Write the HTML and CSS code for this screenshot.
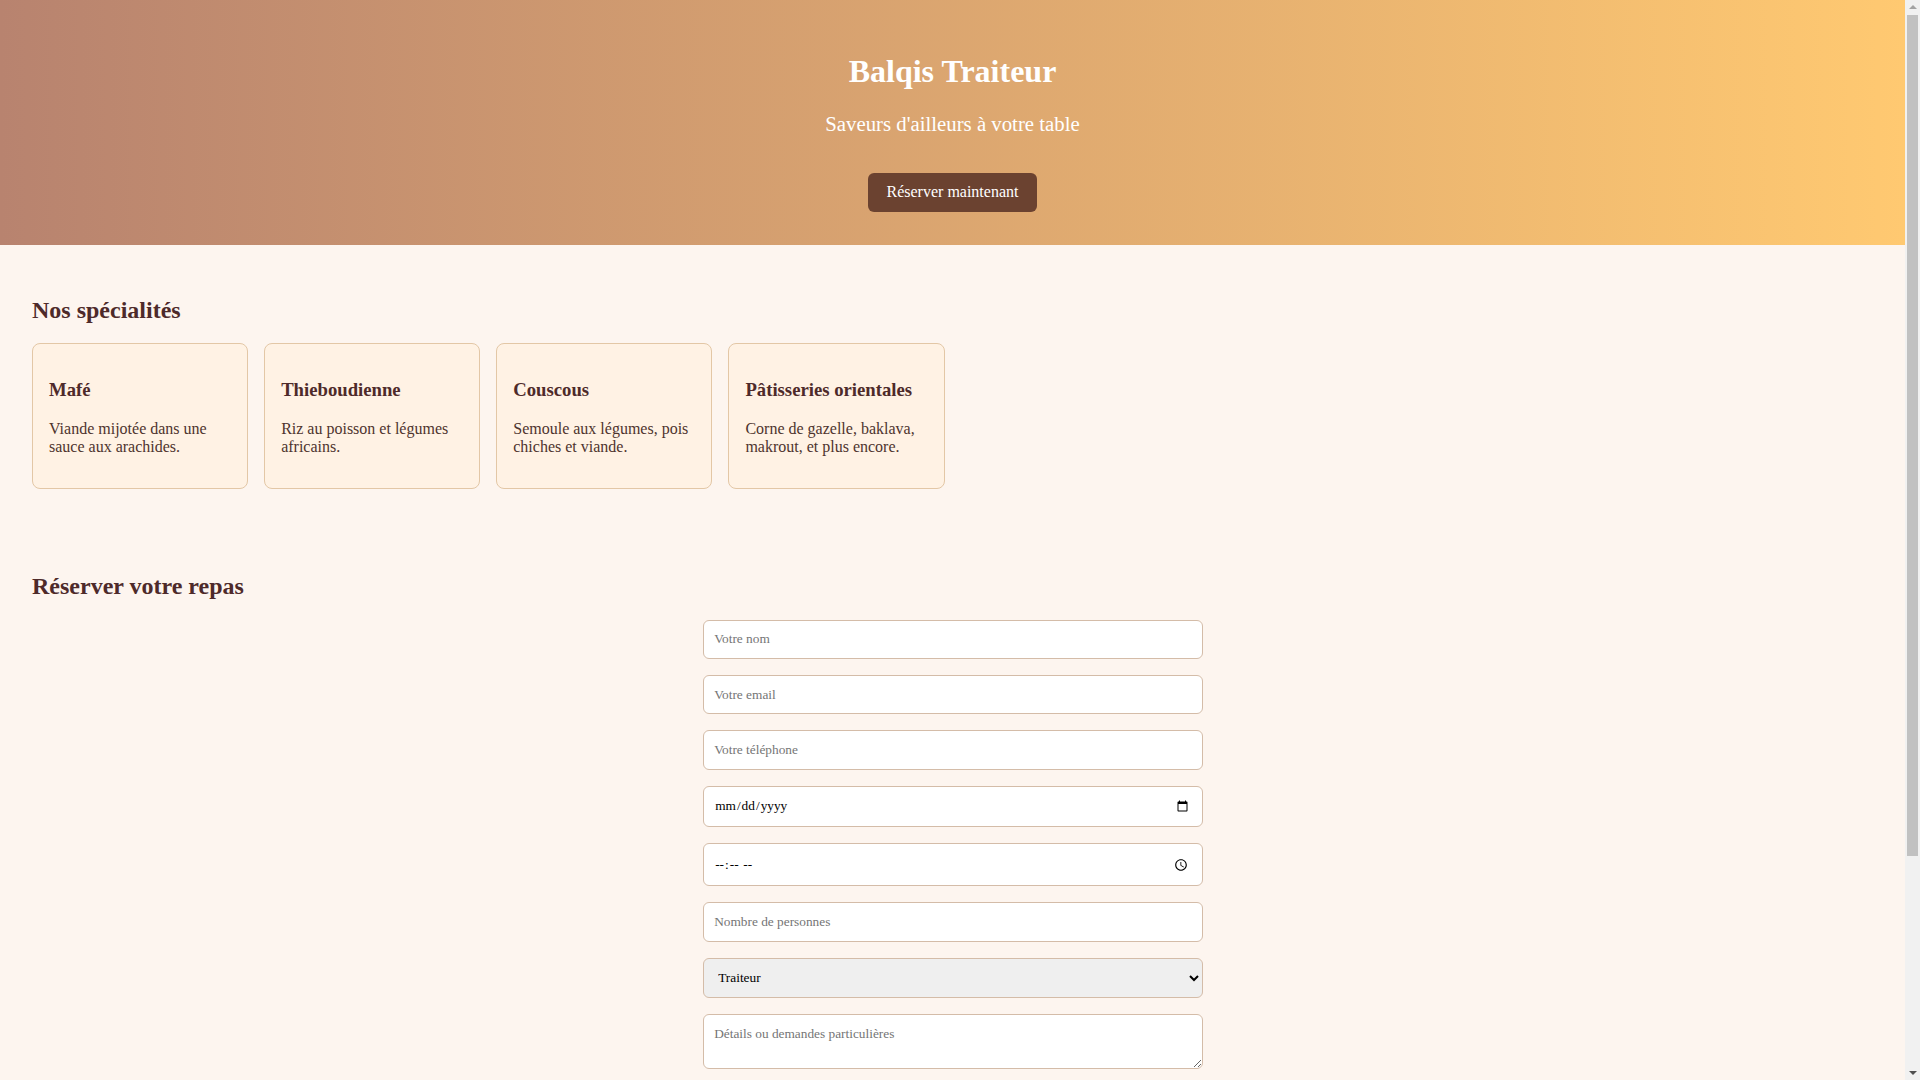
FILE: index.html
```html
<!DOCTYPE html>
<html lang="fr">
<head>
    <meta charset="UTF-8">
    <meta name="viewport" content="width=device-width, initial-scale=1.0">
    <title>Balqis Traiteur</title>
    <link rel="stylesheet" href="styles.css">
</head>
<body>
    <header class="hero">
        <h1>Balqis Traiteur</h1>
        <p>Saveurs d'ailleurs à votre table</p>
        <a href="#reservation" class="btn">Réserver maintenant</a>
    </header>

    <section class="specialites">
        <h2>Nos spécialités</h2>
        <div class="cards">
            <div class="card">
                <h3>Mafé</h3>
                <p>Viande mijotée dans une sauce aux arachides.</p>
            </div>
            <div class="card">
                <h3>Thieboudienne</h3>
                <p>Riz au poisson et légumes africains.</p>
            </div>
            <div class="card">
                <h3>Couscous</h3>
                <p>Semoule aux légumes, pois chiches et viande.</p>
            </div>
            <div class="card">
                <h3>Pâtisseries orientales</h3>
                <p>Corne de gazelle, baklava, makrout, et plus encore.</p>
            </div>
        </div>
    </section>

    <section class="reservation" id="reservation">
        <h2>Réserver votre repas</h2>
        <form class="resa-form">
            <input type="text" name="nom" placeholder="Votre nom">
            <input type="email" name="email" placeholder="Votre email">
            <input type="tel" name="telephone" placeholder="Votre téléphone">
            <input type="date" name="date">
            <input type="time" name="heure">
            <input type="number" name="personnes" placeholder="Nombre de personnes">
            <select name="type">
                <option>Traiteur</option>
                <option>Sur place</option>
                <option>À emporter</option>
            </select>
            <textarea name="details" placeholder="Détails ou demandes particulières"></textarea>
            <button type="submit">Envoyer la réservation</button>
        </form>
    </section>

    <section class="contact">
        <h2>Contact</h2>
        <p>Téléphone : 06 12 34 56 78 — contact@balqis-traiteur.fr</p>
    </section>

    <footer class="footer">
        <p>&copy; 2024 Balqis Traiteur</p>
    </footer>

    <!-- fausse barre de défilement (la capture en montre une) -->
    <div class="scrollbar" aria-hidden="true">
        <span class="arrow up"></span>
        <span class="thumb"></span>
        <span class="arrow down"></span>
    </div>
</body>
</html>
```

FILE: styles.css
```css
body {
    font-family: "Liberation Serif", "Times New Roman", serif;
    background-color: #fdf5ef;
    color: #4e342e;
    margin: 0 15px 0 0;
    padding: 0;
}

.hero {
    background: linear-gradient(to right, #b8836f, #ffc971);
    color: white;
    text-align: center;
    padding: 2rem 2rem 33px;
}

.hero h1 {
    font-size: 2em;
    margin: 0.67em 0;
}

.hero p {
    font-size: 1.3em;
}

.btn {
    display: inline-block;
    margin-top: 1rem;
    background-color: #6b4230;
    color: #fff;
    padding: 10.5px 19px;
    border-radius: 6px;
    text-decoration: none;
}

section {
    padding: 2rem;
}

h2 {
    color: #4e2a2a;
}

.cards {
    display: grid;
    grid-template-columns: repeat(auto-fill, minmax(200px, 1fr));
    gap: 1rem;
}

.card {
    background-color: #fff2e4;
    border: 1px solid #e3c7a6;
    border-radius: 8px;
    padding: 1rem;
}

.card h3 {
    color: #4e2a2a;
}

.resa-form {
    display: flex;
    flex-direction: column;
    gap: 1rem;
    max-width: 500px;
    margin: 0 auto;
}

.resa-form input,
.resa-form select,
.resa-form textarea {
    font-family: inherit;
    padding: 0.8em;
    border: 1px solid #d4bca8;
    border-radius: 6px;
    background-color: #fff;
    box-sizing: border-box;
    width: 100%;
}

.resa-form select {
    background-color: #efefef;
}

.resa-form button {
    font-family: inherit;
    font-size: 16px;
    background-color: #6b4230;
    color: #fff;
    border: none;
    padding: 10px 20px;
    border-radius: 6px;
    cursor: pointer;
}

.footer {
    background-color: #4e342e;
    color: #fff;
    text-align: center;
    padding: 6px;
}

.footer p {
    margin: 0;
}

.scrollbar {
    position: fixed;
    top: 0;
    right: 0;
    width: 15px;
    height: 100vh;
    background-color: #f1f1f1;
    display: flex;
    flex-direction: column;
    align-items: center;
}

.scrollbar .thumb {
    width: 11px;
    flex: 0 0 841px;
    background-color: #c1c1c1;
}

.scrollbar .arrow {
    position: relative;
    width: 15px;
    flex: 0 0 15px;
}

.scrollbar .arrow.down {
    margin-top: auto;
}

.scrollbar .arrow::after {
    content: "";
    position: absolute;
    left: 3.5px;
    border-left: 4px solid transparent;
    border-right: 4px solid transparent;
}

.scrollbar .arrow.up::after {
    top: 5px;
    border-bottom: 4px solid #a3a3a3;
}

.scrollbar .arrow.down::after {
    top: 6px;
    border-top: 4px solid #505050;
}
```
